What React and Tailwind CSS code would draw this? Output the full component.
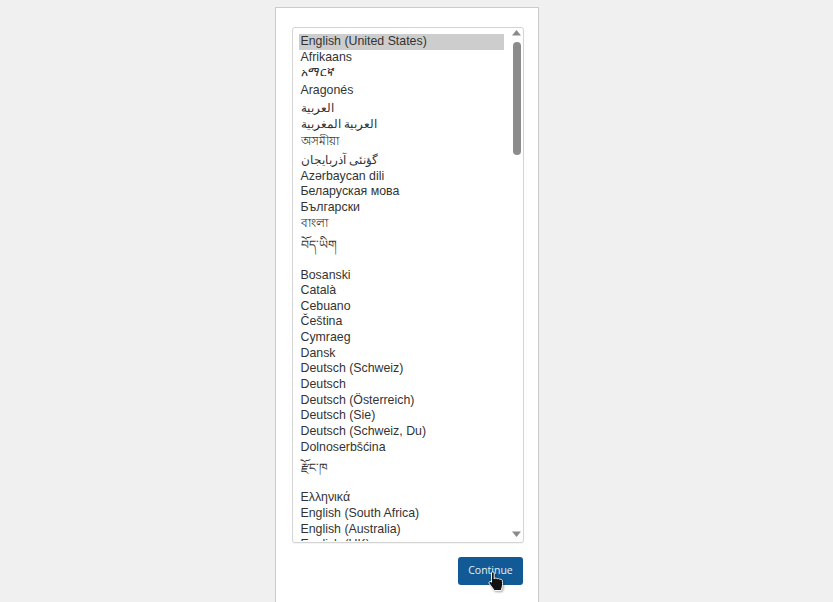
const rows = [
  ["English (United States)", 15.65, 0],
  ["Afrikaans", 15.65, 0],
  ["አማርኛ", 17.6, 0],
  ["Aragonés", 15.65, 0],
  ["العربية", 18.5, 2],
  ["العربية المغربية", 17, 0],
  ["অসমীয়া", 15.65, 0],
  ["گؤنئی آذربایجان", 19, 3],
  ["Azərbaycan dili", 15.65, 0],
  ["Беларуская мова", 15.65, 0],
  ["Български", 15.65, 0],
  ["বাংলা", 15.65, 0],
  ["བོད་ཡིག", 36.3, 7],
  ["Bosanski", 15.65, 0],
  ["Català", 15.65, 0],
  ["Cebuano", 15.65, 0],
  ["Čeština", 15.65, 0],
  ["Cymraeg", 15.65, 0],
  ["Dansk", 15.65, 0],
  ["Deutsch (Schweiz)", 15.65, 0],
  ["Deutsch", 15.65, 0],
  ["Deutsch (Österreich)", 15.65, 0],
  ["Deutsch (Sie)", 15.65, 0],
  ["Deutsch (Schweiz, Du)", 15.65, 0],
  ["Dolnoserbšćina", 15.65, 0],
  ["རྫོང་ཁ", 35.2, 6],
  ["Ελληνικά", 15.65, 0],
  ["English (South Africa)", 15.65, 0],
  ["English (Australia)", 15.65, 0],
  ["English (UK)", 15.65, 0],
];

export default function App() {
  return (
    <div className="h-[602px] overflow-hidden bg-[#f0f0f0] pt-[7px] font-['Liberation_Sans','Noto_Sans',sans-serif]">
      <div className="ml-[275px] h-[620px] w-[264px] border border-[#cccccc] bg-white pl-4 pr-[14px] pt-[19px]">
        <div className="flex h-[516px] w-[232px] overflow-hidden rounded-[3px] border border-[#d4d4d4] bg-white pl-[6px] pt-[6px] shadow-[0_1px_1px_rgba(0,0,0,0.05)]">
          <ul className="h-[507px] w-[205px] overflow-hidden text-[12.35px] text-[#333333]">
            {rows.map(([label, h, pt], i) => (
              <li
                key={label}
                style={{ height: h, paddingTop: pt }}
                className={`whitespace-nowrap pl-[1.5px] leading-[15.65px] ${i === 0 ? "bg-[#cdcdcd]" : ""}`}
              >
                {label}
              </li>
            ))}
          </ul>
          <div className="relative -mt-[6px] ml-[7px] flex h-[514px] w-[11px] flex-col items-center">
            <svg width="9" height="6" viewBox="0 0 9 6" className="mt-[2px]"><path d="M4.500 0 9 5.500H0z" fill="#8a8a8a" /></svg>
            <div className="mt-[6px] h-[113px] w-[8px] rounded-[4px] bg-[#8c8c8c]" />
            <svg width="9" height="6" viewBox="0 0 9 6" className="mt-auto mb-[5px]"><path d="M0 .5h9L4.500 6z" fill="#8a8a8a" /></svg>
          </div>
        </div>
        <div className="mt-[14px] flex justify-end">
          <button className="relative -ml-px mr-px flex h-[28px] w-[65px] items-center justify-center rounded-[3px] bg-[#125a96] font-['Open_Sans',sans-serif] text-[10.5px] text-[#e6eef5]">
            Continue
            <svg width="19" height="24" viewBox="0 0 19 24" className="absolute left-[30px] top-[14px] drop-shadow-[1px_1px_1px_rgba(0,0,0,0.35)]">
              <path d="M3.500 8.500V2c0-1.700 2.700-1.700 2.700 0v6l.2-.4c.8-.8 2.300-.6 2.700.3.800-.6 2.300-.4 2.700.5.900-.4 2.300 0 2.500 1 .5 2.700.4 5.300-.4 7.500l-.7 2.600H6.300L1.500 13c-1-1.200-.4-2.400.5-2.600.6-.1 1.100.2 1.500.8z" fill="#111111" stroke="#f5f5f5" strokeWidth="1" />
            </svg>
          </button>
        </div>
      </div>
    </div>
  );
}
